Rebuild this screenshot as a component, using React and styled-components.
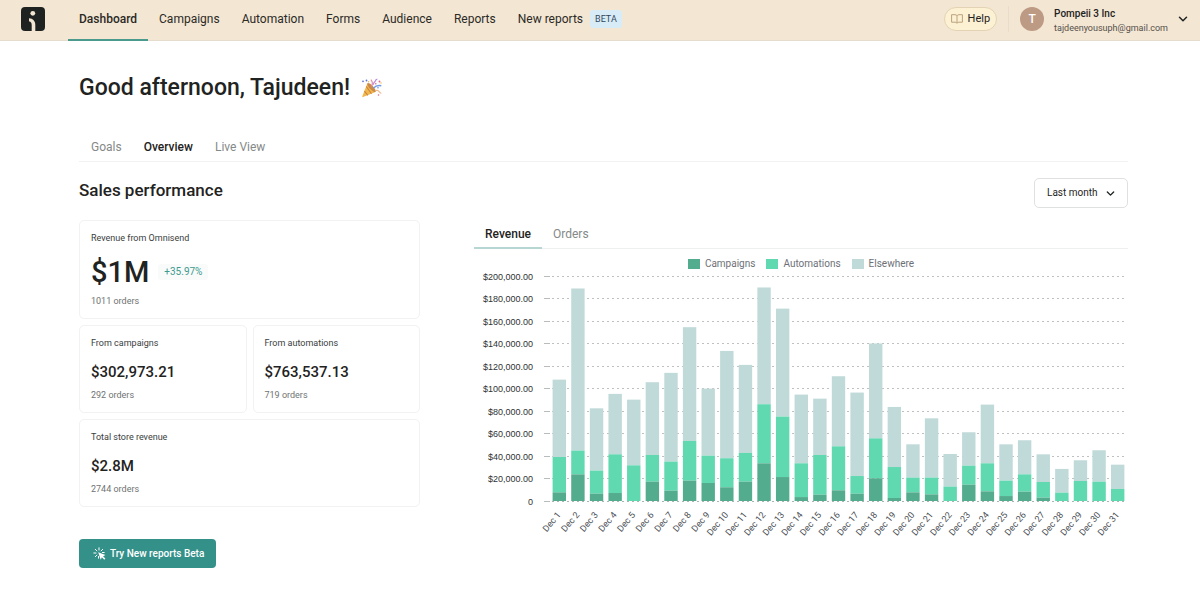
import React from "react";
import styled, { createGlobalStyle } from "styled-components";

const GlobalStyle = createGlobalStyle`
  * { box-sizing: border-box; }
  body {
    margin: 0;
    background: #fff;
    color: #1f2322;
    font-family: Roboto, "Liberation Sans", sans-serif;
    font-size: 12px;
    line-height: 16px;
  }
  button, select { font: inherit; color: inherit; margin: 0; }
  h1, h2, h3, p { margin: 0; }
`;

/* ---------- Top bar ---------- */

const TopBar = styled.header`
  display: flex;
  align-items: stretch;
  justify-content: space-between;
  height: 41px;
  padding: 0 12px 0 21px;
  background: #f3e6d3;
  border-bottom: 1px solid #e6dccd;
`;

const BarGroup = styled.div`
  display: flex;
  align-items: center;
  padding-bottom: 2px;
`;

const LogoLink = styled.a`
  display: flex;
  margin-right: 23px;
`;

const MainNav = styled.nav`
  display: flex;
  align-self: stretch;
`;

const NavLink = styled.a`
  display: flex;
  align-items: center;
  gap: 7px;
  height: 41px;
  padding: 0 11px 2px;
  border-bottom: 2px solid ${(p) => (p.$active ? "#4a9a8d" : "transparent")};
  color: #2b2a26;
  font-weight: ${(p) => (p.$active ? 500 : 400)};
  text-decoration: none;
  white-space: nowrap;
`;

const BetaTag = styled.span`
  padding: 1px 5px;
  border-radius: 3px;
  background: #d8ecf8;
  color: #33475a;
  font-size: 9px;
`;

const HelpButton = styled.button`
  display: flex;
  align-items: center;
  gap: 5px;
  height: 24px;
  padding: 0 6px;
  border: 1px solid #e3d3b4;
  border-radius: 12px;
  background: #fdf1d3;
  font-size: 11px;
`;

const Divider = styled.span`
  width: 1px;
  height: 26px;
  margin: 0 11px;
  background: #e9dcc9;
`;

const AccountButton = styled.button`
  display: flex;
  align-items: center;
  gap: 10px;
  padding: 0;
  border: 0;
  background: none;
  text-align: left;
`;

const Avatar = styled.span`
  display: flex;
  align-items: center;
  justify-content: center;
  width: 24px;
  height: 24px;
  border-radius: 50%;
  background: #bd9a84;
  color: #fff;
  font-weight: 500;
`;

const AccountText = styled.span`
  display: flex;
  flex-direction: column;
  padding-top: 3px;
  font-size: 10px;
  line-height: 14px;
`;

const AccountName = styled.span`
  font-weight: 500;
`;

const AccountMail = styled.span`
  color: #55504a;
  font-size: 9px;
`;

/* ---------- Page ---------- */

const Page = styled.main`
  padding: 31px 72px 30px 79px;
`;

const Greeting = styled.h1`
  display: flex;
  align-items: center;
  gap: 11px;
  font-size: 23px;
  font-weight: 500;
  line-height: 32px;
`;

const PageTabs = styled.nav`
  display: flex;
  gap: 22px;
  margin-top: 30px;
  padding: 5px 12px 6px;
  border-bottom: 1px solid #f1f2f2;
`;

const PageTab = styled.a`
  color: ${(p) => (p.$active ? "#1f2322" : "#858988")};
  font-weight: ${(p) => (p.$active ? 500 : 400)};
  text-decoration: none;
`;

const SectionHead = styled.div`
  display: flex;
  align-items: flex-start;
  justify-content: space-between;
  margin-top: 16px;
`;

const SectionTitle = styled.h2`
  font-size: 17px;
  font-weight: 500;
  line-height: 24px;
`;

const RangePicker = styled.label`
  display: grid;
  align-items: center;
  & > * { grid-area: 1 / 1; }
  & > svg { justify-self: end; margin-right: 13px; pointer-events: none; }
`;

const RangeSelect = styled.select`
  appearance: none;
  height: 30px;
  padding: 0 29px 0 12px;
  border: 1px solid #dfe1e1;
  border-radius: 5px;
  background: #fff;
  font-size: 10px;
`;

const Columns = styled.div`
  display: grid;
  grid-template-columns: minmax(0, 341fr) minmax(0, 654fr);
  gap: 54px;
  margin-top: 12px;
`;

const CardGrid = styled.div`
  display: grid;
  grid-template-columns: 1fr 1fr;
  gap: 6px;
`;

const Card = styled.section`
  display: flex;
  flex-direction: column;
  grid-column: ${(p) => (p.$wide ? "1 / -1" : "auto")};
  padding: 9px 11px 10px;
  border: 1px solid #f1f2f2;
  border-radius: 5px;
`;

const CardLabel = styled.h3`
  color: #3a3e3d;
  font-size: 9px;
  font-weight: 400;
  line-height: 16px;
`;

const Figure = styled.p`
  display: flex;
  align-items: center;
  gap: 9px;
  margin: ${(p) => (p.$large ? "8px 0 4px" : "9px 0 4px")};
  font-size: ${(p) => (p.$large ? "29px" : "15px")};
  font-weight: 500;
  line-height: ${(p) => (p.$large ? "36px" : "24px")};
`;

const Delta = styled.span`
  padding: 0 6px;
  border-radius: 3px;
  background: #f9fbfb;
  color: #3d9a8f;
  font-size: 10px;
  font-weight: 400;
  line-height: 16px;
`;

const Orders = styled.p`
  color: #6f7372;
  font-size: 9px;
  line-height: 14px;
`;

const TryButton = styled.button`
  display: flex;
  align-items: center;
  gap: 4px;
  height: 29px;
  margin-top: 32px;
  padding: 0 12px 0 14px;
  border: 0;
  border-radius: 4px;
  background: #33918a;
  color: #fff;
  font-size: 10px;
  font-weight: 500;
`;

/* ---------- Chart ---------- */

const ChartTabs = styled.div`
  display: flex;
  border-bottom: 1px solid #eef0f0;
`;

const ChartTab = styled.button`
  margin-bottom: -1px;
  padding: 6px 11px 5px;
  border: 0;
  border-bottom: 2px solid ${(p) => (p.$active ? "#b5d6d2" : "transparent")};
  background: none;
  color: ${(p) => (p.$active ? "#1f2322" : "#858988")};
  font-weight: ${(p) => (p.$active ? 500 : 400)};
`;

const Legend = styled.ul`
  display: flex;
  justify-content: center;
  gap: 11px;
  margin: 7px 0 0;
  padding: 0;
  list-style: none;
  color: #6d7177;
  font-size: 10px;
`;

const LegendItem = styled.li`
  display: flex;
  align-items: center;
  gap: 5px;
`;

const Swatch = styled.span`
  width: 12px;
  height: 10px;
  background: ${(p) => p.$color};
`;

const ChartSvg = styled.svg`
  display: block;
  width: 100%;
  height: auto;
`;

const AxisText = styled.text`
  fill: #2f3333;
  font-family: "Liberation Sans", sans-serif;
  font-size: 9px;
  text-anchor: end;
`;

const DayText = styled(AxisText)`
  fill: #4a4e54;
  font-family: Roboto, sans-serif;
`;

const COLORS = { campaigns: "#54ac8e", automations: "#60d8b0", elsewhere: "#c0dad9" };

/* Cumulative tops per day, in thousands: campaigns, + automations, + elsewhere */
const DAYS = [
  [7.7, 39.1, 107.9], [23.7, 44.8, 188.9], [6.5, 27, 82.4], [7.1, 41.5, 95.2],
  [0, 31.7, 90.1], [17.2, 40.9, 105.6], [9.2, 35, 113.9], [18.1, 53.4, 154.5],
  [16, 40.3, 99.9], [12.2, 38, 133.4], [17.2, 42.7, 121], [33.5, 86, 189.8],
  [21.3, 75, 171], [3.5, 33.5, 94.6], [5.6, 40.9, 91], [9.5, 48.6, 110.9],
  [6.5, 22.2, 96.4], [20.2, 55.7, 140], [2.7, 30.2, 83.6], [7.7, 20.8, 50.4],
  [5.9, 20.8, 73.5], [0, 12.8, 41.8], [14.5, 31.4, 61.1], [8.6, 33.5, 85.7],
  [4.4, 18.1, 50.4], [8.3, 23.7, 54], [3, 16.9, 41.5], [0, 7.4, 28.5],
  [0, 17.8, 36.2], [0, 17.2, 45.1], [0, 10.7, 32.3],
];

const PLOT = { left: 76, right: 653, top: 4, bottom: 229 };
const BAND = (PLOT.right - PLOT.left) / DAYS.length;
const BAR = BAND * 0.72;
const yOf = (k) => PLOT.bottom - (k / 200) * (PLOT.bottom - PLOT.top);

function RevenueChart() {
  const ticks = Array.from({ length: 11 }, (_, i) => i * 20);
  const labelY = PLOT.bottom + 14;
  return (
    <ChartSvg viewBox="0 0 654 270" role="img" aria-label="Revenue by day, December">
      {ticks.map((k) => {
        const y = Math.floor(yOf(k)) + 0.5;
        return (
          <g key={k}>
            <AxisText x="59" y={y + 3}>{k === 0 ? "0" : `$${k},000.00`}</AxisText>
            <line x1="70" x2="76" y1={y} y2={y} stroke="#b9bcbc" />
            <line x1="78" x2="652" y1={y} y2={y} stroke="#bfc1c1" strokeDasharray="2 3" />
          </g>
        );
      })}
      {DAYS.map(([c, a, e], i) => {
        const x = PLOT.left + i * BAND + (BAND - BAR) / 2;
        const cx = x + BAR / 2 + 2;
        return (
          <g key={i}>
            <rect x={x} width={BAR} y={yOf(e)} height={yOf(a) - yOf(e)} fill={COLORS.elsewhere} />
            <rect x={x} width={BAR} y={yOf(a)} height={yOf(c) - yOf(a)} fill={COLORS.automations} />
            <rect x={x} width={BAR} y={yOf(c)} height={yOf(0) - yOf(c)} fill={COLORS.campaigns} />
            <DayText x={cx} y={labelY} transform={`rotate(-50 ${cx} ${labelY})`}>{`Dec ${i + 1}`}</DayText>
          </g>
        );
      })}
      <line x1="78" x2="652" y1={PLOT.bottom + 0.5} y2={PLOT.bottom + 0.5} stroke="#a9b5b1" strokeDasharray="2 3" />
    </ChartSvg>
  );
}

/* ---------- Icons ---------- */

const Logo = () => (
  <svg width="24" height="24" viewBox="0 0 24 24" aria-hidden="true">
    <rect width="24" height="24" rx="4" fill="#1e2321" />
    <circle cx="11.8" cy="6.3" r="2.4" fill="#f3e6d3" />
    <path d="M8 11.2c4 .3 6.300 2.700 6.300 6.800v6h-3.600v-6c0-2.200-.8-3.300-2.700-3.700z" fill="#f3e6d3" />
  </svg>
);

const Chevron = ({ size }) => (
  <svg width={size} height={size} viewBox="0 0 10 10" fill="none" stroke="#1f2322" strokeWidth="1.5" strokeLinecap="round" strokeLinejoin="round" aria-hidden="true">
    <path d="M1.500 3.300 5 6.800l3.500-3.500" />
  </svg>
);

const BookIcon = () => (
  <svg width="12" height="10" viewBox="0 0 12 10" fill="none" stroke="#b9a27f" strokeWidth="1" aria-hidden="true">
    <path d="M6 1.800C5.500 1 4.800.7 4 .7H.6v7.500h3.600c.9 0 1.500.4 1.800 1.100.3-.7.900-1.100 1.800-1.100h3.600V.7H8C7.200.7 6.500 1 6 1.800zM6 1.800v7.300" />
  </svg>
);

const PartyIcon = () => (
  <svg width="22" height="20" viewBox="0 0 22 20" aria-hidden="true">
    <path d="M6.500 5 1.300 18.300c-.2.600.2 1 .8.800L15 13.800z" fill="#f2b84c" />
    <path d="m5.300 8.500 5.200 7.200M3.400 13l3.400 4.300" stroke="#c98345" strokeWidth="1.100" />
    <ellipse cx="10.500" cy="9.500" rx="1.900" ry="5.800" transform="rotate(-43 10.500 9.500)" fill="#c98a4a" />
    <path d="M10.500 8.500c1.300-2.500 1-5-.6-6.800" stroke="#e58a9c" strokeWidth="1.100" fill="none" />
    <path d="M12.500 10c2-2.200 4.800-2.800 7.800-2.300" stroke="#6f9be8" strokeWidth="1.400" fill="none" />
    <path d="M12 7c.3-2.800 1.800-2.500 2.300-4 .3-1 .9-1.700 2-1.800" stroke="#b98bdc" strokeWidth="1.200" fill="none" />
    <path d="M15 12.500c1.500-.6 2.500 0 3.300 1.300s1.200 1.500 2 1.300" stroke="#efb98a" strokeWidth="1.200" fill="none" />
    <g fill="#5b76d8"><circle cx="2" cy="3.300" r=".9" /><circle cx="5.500" cy="2.500" r=".9" /><circle cx="17" cy="9.800" r=".7" /></g>
    <g fill="#e0687f"><circle cx="18.500" cy="3.500" r=".9" /><circle cx="14.800" cy="5.800" r=".8" /><circle cx="17.500" cy="17" r=".8" /></g>
    <g fill="#f0b445"><circle cx="20" cy="5" r=".7" /><circle cx="7.500" cy="3.800" r=".7" /></g>
  </svg>
);

const ClickIcon = () => (
  <svg width="13" height="13" viewBox="0 0 13 13" fill="none" stroke="#fff" strokeLinecap="round" aria-hidden="true">
    <path d="M6 .8v2.200M2.300 2.300l1.600 1.600M.8 6H3M9.700 2.300 8.100 3.900M2.300 9.700l1.600-1.600M11.200 5.500H9.500M5.500 11.200V9.500" />
    <path d="m5.200 5.200 7.300 2.700-2.500 1.300 2.400 2.400-1.100 1.100-2.400-2.400-1.200 2.500z" fill="#fff" stroke="none" />
  </svg>
);

/* ---------- App ---------- */

const NAV = ["Dashboard", "Campaigns", "Automation", "Forms", "Audience", "Reports"];

function StatCard({ label, value, orders, delta, wide, large }) {
  return (
    <Card $wide={wide}>
      <CardLabel>{label}</CardLabel>
      <Figure $large={large}>
        {value}
        {delta && <Delta>{delta}</Delta>}
      </Figure>
      <Orders>{orders}</Orders>
    </Card>
  );
}

export default function App() {
  return (
    <>
      <GlobalStyle />
      <TopBar>
        <BarGroup>
          <LogoLink href="#home" aria-label="Home"><Logo /></LogoLink>
          <MainNav>
            {NAV.map((name, i) => (
              <NavLink key={name} href={`#${name.toLowerCase()}`} $active={i === 0}>{name}</NavLink>
            ))}
            <NavLink href="#new-reports">New reports<BetaTag>BETA</BetaTag></NavLink>
          </MainNav>
        </BarGroup>
        <BarGroup>
          <HelpButton type="button"><BookIcon />Help</HelpButton>
          <Divider />
          <AccountButton type="button">
            <Avatar>T</Avatar>
            <AccountText>
              <AccountName>Pompeii 3 Inc</AccountName>
              <AccountMail>tajdeenyousuph@gmail.com</AccountMail>
            </AccountText>
            <Chevron size={10} />
          </AccountButton>
        </BarGroup>
      </TopBar>
      <Page>
        <Greeting>Good afternoon, Tajudeen! <PartyIcon /></Greeting>
        <PageTabs>
          <PageTab href="#goals">Goals</PageTab>
          <PageTab href="#overview" $active>Overview</PageTab>
          <PageTab href="#live">Live View</PageTab>
        </PageTabs>
        <SectionHead>
          <SectionTitle>Sales performance</SectionTitle>
          <RangePicker>
            <RangeSelect aria-label="Period" defaultValue="Last month">
              <option>Last month</option>
            </RangeSelect>
            <Chevron size={9} />
          </RangePicker>
        </SectionHead>
        <Columns>
          <div>
            <CardGrid>
              <StatCard wide large label="Revenue from Omnisend" value="$1M" delta="+35.97%" orders="1011 orders" />
              <StatCard label="From campaigns" value="$302,973.21" orders="292 orders" />
              <StatCard label="From automations" value="$763,537.13" orders="719 orders" />
              <StatCard wide label="Total store revenue" value="$2.8M" orders="2744 orders" />
            </CardGrid>
            <TryButton type="button"><ClickIcon />Try New reports Beta</TryButton>
          </div>
          <div>
            <ChartTabs role="tablist">
              <ChartTab type="button" role="tab" aria-selected="true" $active>Revenue</ChartTab>
              <ChartTab type="button" role="tab" aria-selected="false">Orders</ChartTab>
            </ChartTabs>
            <Legend>
              <LegendItem><Swatch $color={COLORS.campaigns} />Campaigns</LegendItem>
              <LegendItem><Swatch $color={COLORS.automations} />Automations</LegendItem>
              <LegendItem><Swatch $color={COLORS.elsewhere} />Elsewhere</LegendItem>
            </Legend>
            <RevenueChart />
          </div>
        </Columns>
      </Page>
    </>
  );
}
